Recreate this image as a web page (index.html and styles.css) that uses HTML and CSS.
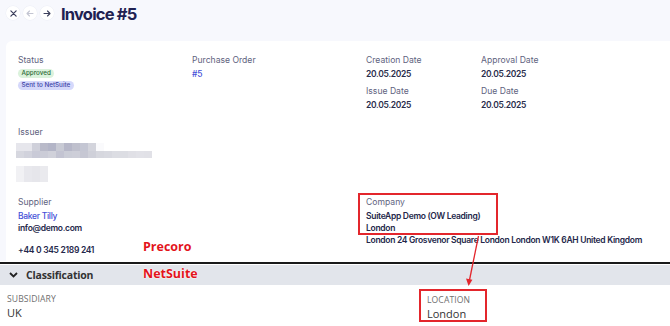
FILE: index.html
```html
<!DOCTYPE html>
<html>
<head>
<meta charset="utf-8">
<link rel="stylesheet" href="styles.css">
</head>
<body>
<div class="page">
  <header class="topbar">
    <span class="circ"><svg width="7" height="7" viewBox="0 0 8 8"><path d="M1 1L7 7M7 1L1 7" stroke="#3c3f5c" stroke-width="1.4" stroke-linecap="round"/></svg></span>
    <span class="circ"><svg width="8" height="7" viewBox="0 0 8 7"><path d="M7 3.5H1M3.5 1L1 3.5L3.5 6" stroke="#c3c5d2" stroke-width="1.1" fill="none" stroke-linecap="round" stroke-linejoin="round"/></svg></span>
    <span class="circ"><svg width="8" height="7" viewBox="0 0 8 7"><path d="M1 3.5H7M4.5 1L7 3.5L4.5 6" stroke="#3c3f5c" stroke-width="1.1" fill="none" stroke-linecap="round" stroke-linejoin="round"/></svg></span>
    <h1 class="title">Invoice #5</h1>
  </header>

  <div class="wrap">
    <section class="card">
      <div class="row-top">
        <div class="field">
          <div class="label">Status</div>
          <div class="badges">
            <span class="badge green">Approved</span>
            <span class="badge purple">Sent to NetSuite</span>
          </div>
        </div>
        <div class="field">
          <div class="label">Purchase Order</div>
          <div class="value link">#5</div>
        </div>
        <div class="dates">
          <div class="field">
            <div class="label">Creation Date</div>
            <div class="value">20.05.2025</div>
          </div>
          <div class="field">
            <div class="label">Approval Date</div>
            <div class="value">20.05.2025</div>
          </div>
          <div class="field">
            <div class="label">Issue Date</div>
            <div class="value">20.05.2025</div>
          </div>
          <div class="field">
            <div class="label">Due Date</div>
            <div class="value">20.05.2025</div>
          </div>
        </div>
      </div>

      <div class="issuer">
        <div class="label">Issuer</div>
        <div class="blur">
          <div class="px-row r1">
            <i style="background:#e6e6ec"></i><i style="background:#cfd0da"></i><i style="background:#b9bac9"></i><i style="background:#b3b5c7"></i><i style="background:#c8cad4"></i><i style="background:#b6b7c8"></i><i style="background:#bfc0cd"></i><i style="background:#c4c6d3"></i><i style="background:#d3d4dc"></i><i style="background:#fafafc"></i>
          </div>
          <div class="px-row r2">
            <i style="background:#d6d7df"></i><i style="background:#d1d2dc"></i><i style="background:#c9cad7"></i><i style="background:#cbccd7"></i><i style="background:#d0d1da"></i><i style="background:#c3c4d2"></i><i style="background:#cbcdd7"></i><i style="background:#cdced8"></i><i style="background:#c6c7d3"></i><i style="background:#cfd0d9"></i><i style="background:#d6d7de"></i><i style="background:#d8d9e0"></i><i style="background:#dcdde3"></i><i style="background:#dcdde3"></i><i style="background:#e0e0e6"></i><i style="background:#e2e2e8"></i><i style="background:#e1e1e7"></i>
          </div>
          <div class="px-row r3">
            <i style="background:#f1f1f4"></i><i style="background:#e8e8ed"></i><i style="background:#e6e6eb"></i><i style="background:#eaeaee"></i>
          </div>
        </div>
      </div>

      <div class="row-bottom">
        <div class="supplier">
          <div class="label">Supplier</div>
          <div class="value link">Baker Tilly</div>
          <div class="value strong">info@demo.com</div>
          <div class="value strong phone">+44 0 345 2189 241</div>
        </div>
        <div class="company">
          <div class="hl-box">
            <div class="label">Company</div>
            <div class="value strong first">SuiteApp Demo (OW Leading)</div>
            <div class="value strong">London</div>
          </div>
          <div class="value strong addr">London 24 Grosvenor Square London London W1K 6AH United Kingdom</div>
        </div>
      </div>
    </section>
  </div>

  <section class="ns">
    <div class="ns-bar">
      <svg class="chev" width="9" height="6" viewBox="0 0 9 6"><path d="M1 1L4.5 4.5L8 1" stroke="#222" stroke-width="1.8" fill="none"/></svg>
      <span class="ns-title">Classification</span>
    </div>
    <div class="ns-body">
      <div class="ns-field">
        <div class="ns-label">SUBSIDIARY</div>
        <div class="ns-value">UK</div>
      </div>
      <div class="ns-field loc">
        <div class="ns-label">LOCATION</div>
        <div class="ns-value">London</div>
      </div>
    </div>
  </section>

  <span class="tag tag-precoro">Precoro</span>
  <span class="tag tag-netsuite">NetSuite</span>
  <svg class="arrow" width="670" height="326" viewBox="0 0 670 326">
    <path d="M478.5 236L469.5 280" stroke="#e3262c" stroke-width="1.3"/>
    <path d="M466 278.5L468.6 286L472.4 279.8Z" fill="#e3262c"/>
  </svg>
</div>
</body>
</html>
```

FILE: styles.css
```css
* { box-sizing: border-box; margin: 0; padding: 0; }
html, body { width: 670px; height: 326px; overflow: hidden; }
body { background: #ffffff; font-family: Inter, "Noto Sans", sans-serif; color: #2a2d4b; }

.page { position: relative; width: 670px; height: 326px; }

.topbar {
  height: 41px;
  background: #f7f8fd;
  display: flex;
  align-items: flex-start;
  padding: 6px 0 0 6px;
  gap: 3px;
}
.circ {
  width: 14px; height: 14px; border-radius: 50%;
  background: #fff;
  box-shadow: 0 0 0 0.5px #eceef6;
  display: flex; align-items: center; justify-content: center;
}
.title {
  margin-left: 4px;
  margin-top: -3px;
  font-size: 16.5px;
  line-height: 22px;
  font-weight: 700;
  color: #1f2152;
  letter-spacing: -0.8px;
}

.wrap { background: #f7f8fd; padding-left: 6px; height: 220px; }
.card {
  background: #fff;
  border-radius: 6px 0 0 0;
  height: 220px;
  padding: 13px 0 0 12px;
}

.label { font-size: 8.6px; line-height: 12px; color: #5f6380; }
.value { font-size: 8.5px; line-height: 12px; color: #2a2d4b; font-weight: 600; letter-spacing: -0.3px; }
.value.strong { font-weight: 600; color: #24274a; }
.link { color: #4450d8; font-weight: 500; }

.row-top { display: grid; grid-template-columns: 174px 174px 289px; }
.field .value { margin-top: 2px; }
.badges { display: flex; flex-direction: column; align-items: flex-start; gap: 3px; margin-top: 3px; }
.badge { font-size: 6.3px; line-height: 9px; height: 9px; padding: 0 3.5px; border-radius: 5px; font-weight: 500; }
.badge.green { background: #dbf2dc; color: #2c6a37; }
.badge.purple { background: #d5d8fb; color: #3c42a6; }

.dates { display: grid; grid-template-columns: 115px 1fr; row-gap: 5px; }

.issuer { margin-top: 15px; }
.blur { margin-top: 5px; margin-left: -2px; }
.px-row { display: flex; }
.px-row i { display: block; width: 8px; }
.r1 { height: 8px; }
.r1 i { height: 8px; }
.r2 { height: 7px; }
.r2 i { height: 7px; }
.r1 i:first-child { width: 16px; }
.r3 { margin-top: 8px; height: 16px; }
.r3 i { height: 16px; }

.row-bottom { display: grid; grid-template-columns: 348px 1fr; margin-top: 14px; }
.supplier .value { margin-top: 0; }
.supplier .link { margin-top: 2px; }
.supplier .phone { margin-top: 10px; }
.hl-box {
  width: 140px;
  height: 42px;
  margin-left: -8px;
  margin-top: -3px;
  padding: 1px 0 0 6px;
  border: 2px solid #e3262c;
}
.hl-box .first { margin-top: 2px; }
.hl-box .value { line-height: 12px; }
.addr { margin-top: -1px; white-space: nowrap; line-height: 12px; }

.ns { font-family: "Open Sans", "Noto Sans", sans-serif; border-top: 2px solid #1a1a1a; margin-top: 1px; }
.ns-bar {
  margin-top: 1px;
  height: 20px;
  background: #e2e5eb;
  display: flex; align-items: center;
  padding-left: 9px;
  gap: 8px;
}
.ns-title { font-size: 10.5px; font-weight: 700; color: #333; letter-spacing: -0.2px; }
.ns-body { display: flex; padding-top: 9px; padding-left: 7px; }
.ns-field { width: 412px; }
.ns-label { font-size: 8.6px; line-height: 11px; color: #6f6f6f; letter-spacing: 0.1px; }
.ns-value { font-size: 11px; line-height: 15px; color: #333; }
.loc {
  width: 68px;
  height: 33px;
  margin-top: -5px;
  border: 2px solid #e3262c;
  padding: 4px 0 0 6px;
}

.tag {
  position: absolute;
  font-family: "Open Sans", "Noto Sans", sans-serif;
  font-weight: 700;
  font-size: 12.5px;
  color: #e3141c;
  text-shadow: 0 0 1px #fff, 0 0 2px #fff;
  line-height: 16px;
}
.tag-precoro { left: 143px; top: 239px; }
.tag-netsuite { left: 143px; top: 266px; }
.arrow { position: absolute; left: 0; top: 0; pointer-events: none; }
```
